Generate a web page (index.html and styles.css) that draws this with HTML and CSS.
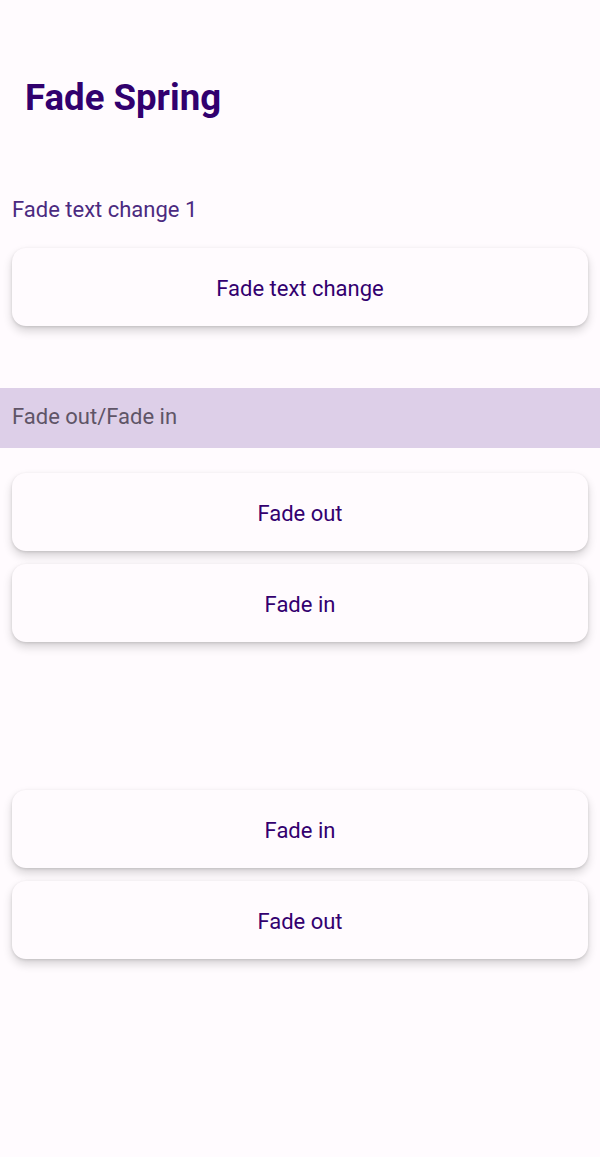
FILE: index.html
```html
<!DOCTYPE html>
<html>
<head>
<meta charset="utf-8">
<link rel="stylesheet" href="styles.css">
</head>
<body>
<div class="screen">
  <header class="topbar">
    <h1 class="title">Fade Spring</h1>
  </header>
  <section class="section first">
    <div class="label">Fade text change 1</div>
    <div class="buttons">
      <div class="btn">Fade text change</div>
    </div>
  </section>
  <section class="section second">
    <div class="band">Fade out/Fade in</div>
    <div class="buttons">
      <div class="btn">Fade out</div>
      <div class="btn">Fade in</div>
    </div>
  </section>
  <section class="section third">
    <div class="spacer"></div>
    <div class="buttons">
      <div class="btn">Fade in</div>
      <div class="btn">Fade out</div>
    </div>
  </section>
</div>
</body>
</html>
```

FILE: styles.css
```css
* { box-sizing: border-box; }
html, body {
  margin: 0;
  padding: 0;
  background: #fffbfe;
  font-family: Roboto, "Noto Sans", sans-serif;
}
.screen {
  width: 600px;
  height: 1157px;
  display: flex;
  flex-direction: column;
}
.topbar {
  height: 180px;
  padding: 0 25px;
  display: flex;
  align-items: flex-start;
}
.title {
  margin: 0;
  margin-top: 74px;
  font-size: 36.6px;
  line-height: 48px;
  font-weight: 700;
  color: #31006e;
}
.label {
  padding: 0 12px;
  font-size: 22px;
  line-height: 60px;
  height: 60px;
  color: #4b2a80;
}
.buttons {
  display: flex;
  flex-direction: column;
  gap: 13px;
  padding: 0 12px;
}
.first .buttons { margin-top: 8px; }
.btn {
  height: 78px;
  border-radius: 14px;
  background: #fffbfe;
  box-shadow: 0 5px 10px rgba(0,0,0,0.16), 0 1px 3px rgba(0,0,0,0.12);
  display: flex;
  align-items: center;
  justify-content: center;
  padding-top: 3px;
  font-size: 22px;
  color: #33006f;
}
.second { margin-top: 62px; }
.band {
  height: 60px;
  background: #ddcfe8;
  color: #5f5567;
  font-size: 22px;
  line-height: 57px;
  padding: 0 12px;
}
.second .buttons { margin-top: 25px; }
.third .spacer { height: 148px; }
```
